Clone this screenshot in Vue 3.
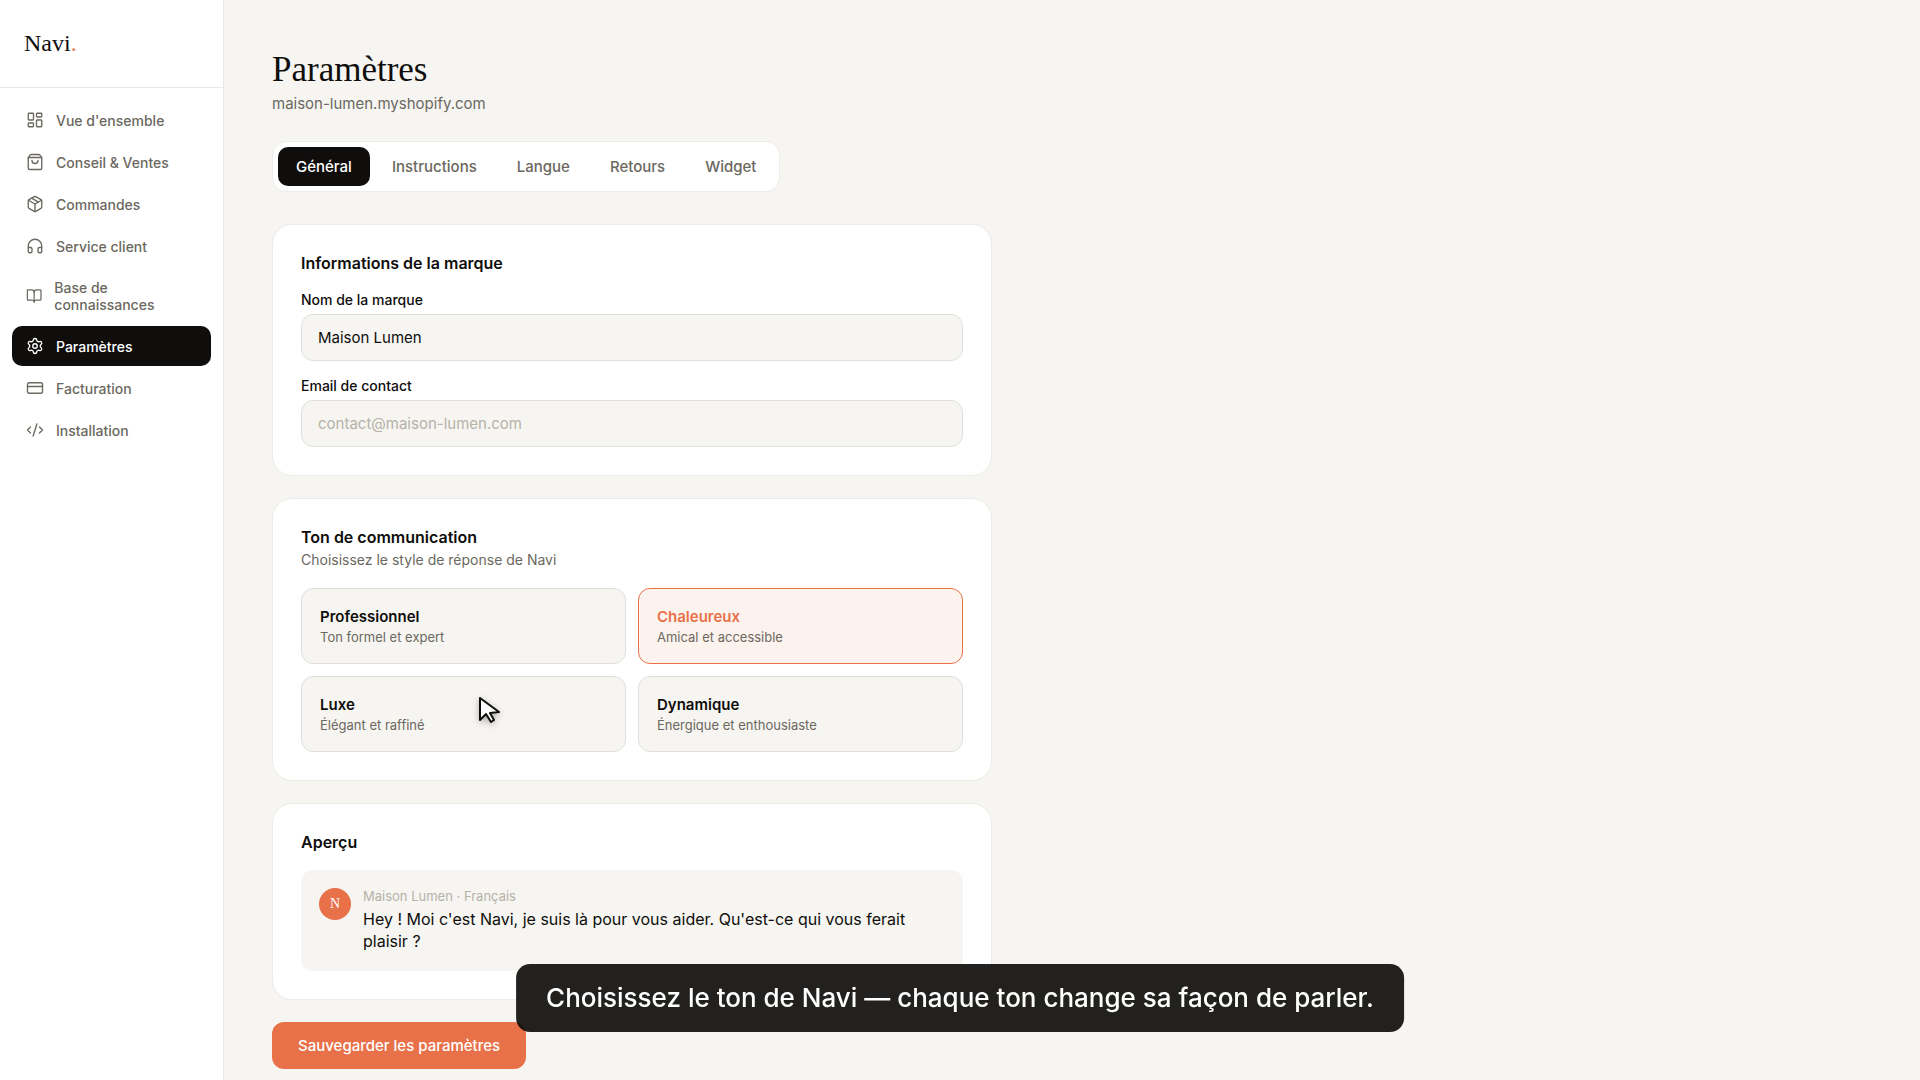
<template>
    <div class="layout">
        <aside class="sidebar">
            <div class="logo">Navi<span>.</span></div>
            <nav>
                <a v-for="item in navItems" :key="item.label" href="#" :class="{ active: item.active }">
                    <svg viewBox="0 0 24 24" width="18" height="18" aria-hidden="true">
                        <path v-for="d in item.icon" :key="d" :d="d" />
                    </svg>
                    <span>{{ item.label }}</span>
                </a>
            </nav>
        </aside>

        <main>
            <h1>Paramètres</h1>
            <p class="shop">maison-lumen.myshopify.com</p>

            <div class="tabs">
                <button v-for="tab in tabs" :key="tab" type="button" :class="{ active: tab === activeTab }" @click="activeTab = tab">{{ tab }}</button>
            </div>

            <form @submit.prevent>
                <section class="card">
                    <h2>Informations de la marque</h2>
                    <div class="fields">
                        <div class="field">
                            <label for="brand">Nom de la marque</label>
                            <input id="brand" v-model="brand" type="text">
                        </div>
                        <div class="field">
                            <label for="email">Email de contact</label>
                            <input id="email" v-model="email" type="email" placeholder="contact@maison-lumen.com">
                        </div>
                    </div>
                </section>

                <section class="card">
                    <h2 class="with-hint">Ton de communication</h2>
                    <p class="hint">Choisissez le style de réponse de Navi</p>
                    <div class="tones">
                        <button v-for="t in tones" :key="t.name" type="button" class="tone" :class="{ selected: t.name === tone }" @click="tone = t.name">
                            <strong>{{ t.name }}</strong>
                            <span>{{ t.description }}</span>
                        </button>
                    </div>
                </section>

                <section class="card">
                    <h2>Aperçu</h2>
                    <div class="preview">
                        <div class="avatar">N</div>
                        <div class="bubble">
                            <p class="meta">{{ brand }} · Français</p>
                            <p class="message">Hey ! Moi c'est Navi, je suis là pour vous aider. Qu'est-ce qui vous ferait plaisir ?</p>
                        </div>
                    </div>
                </section>

                <button type="submit" class="save">Sauvegarder les paramètres</button>
            </form>
        </main>

        <div class="caption">Choisissez le ton de Navi — chaque ton change sa façon de parler.</div>

        <svg class="cursor" viewBox="0 0 24 30" width="24" height="30" aria-hidden="true">
            <path d="M2 2v22l6-6 5 8 3-2-4-7 9-1z" />
        </svg>
    </div>
</template>

<script setup>
import { ref } from "vue";

const navItems = [
    {
        label: "Vue d'ensemble",
        icon: [
            "M4 3h5a1 1 0 0 1 1 1v7a1 1 0 0 1-1 1H4a1 1 0 0 1-1-1V4a1 1 0 0 1 1-1z",
            "M15 3h5a1 1 0 0 1 1 1v3a1 1 0 0 1-1 1h-5a1 1 0 0 1-1-1V4a1 1 0 0 1 1-1z",
            "M15 12h5a1 1 0 0 1 1 1v7a1 1 0 0 1-1 1h-5a1 1 0 0 1-1-1v-7a1 1 0 0 1 1-1z",
            "M4 16h5a1 1 0 0 1 1 1v3a1 1 0 0 1-1 1H4a1 1 0 0 1-1-1v-3a1 1 0 0 1 1-1z"
        ]
    },
    {
        label: "Conseil & Ventes",
        icon: [
            "M16 10a4 4 0 0 1-8 0",
            "M3.103 6.034h17.794",
            "M3.4 5.467a2 2 0 0 0-.4 1.2V20a2 2 0 0 0 2 2h14a2 2 0 0 0 2-2V6.667a2 2 0 0 0-.4-1.2l-2-2.667A2 2 0 0 0 17 2H7a2 2 0 0 0-1.6.8z"
        ]
    },
    {
        label: "Commandes",
        icon: [
            "M11 21.73a2 2 0 0 0 2 0l7-4A2 2 0 0 0 21 16V8a2 2 0 0 0-1-1.73l-7-4a2 2 0 0 0-2 0l-7 4A2 2 0 0 0 3 8v8a2 2 0 0 0 1 1.73z",
            "M12 22V12",
            "m3.3 7 8.7 5 8.7-5",
            "m7.5 4.27 9 5.15"
        ]
    },
    {
        label: "Service client",
        icon: ["M3 14h3a2 2 0 0 1 2 2v3a2 2 0 0 1-2 2H5a2 2 0 0 1-2-2v-7a9 9 0 0 1 18 0v7a2 2 0 0 1-2 2h-1a2 2 0 0 1-2-2v-3a2 2 0 0 1 2-2h3"]
    },
    {
        label: "Base de connaissances",
        icon: [
            "M12 7v14",
            "M3 18a1 1 0 0 1-1-1V4a1 1 0 0 1 1-1h5a4 4 0 0 1 4 4 4 4 0 0 1 4-4h5a1 1 0 0 1 1 1v13a1 1 0 0 1-1 1h-6a3 3 0 0 0-3 3 3 3 0 0 0-3-3z"
        ]
    },
    {
        label: "Paramètres",
        active: true,
        icon: [
            "M9.671 4.136a2.34 2.34 0 0 1 4.659 0 2.34 2.34 0 0 0 3.319 1.915 2.34 2.34 0 0 1 2.33 4.033 2.34 2.34 0 0 0 0 3.831 2.34 2.34 0 0 1-2.33 4.033 2.34 2.34 0 0 0-3.319 1.915 2.34 2.34 0 0 1-4.659 0 2.34 2.34 0 0 0-3.32-1.915 2.34 2.34 0 0 1-2.33-4.033 2.34 2.34 0 0 0 0-3.831A2.34 2.34 0 0 1 6.35 6.051a2.34 2.34 0 0 0 3.319-1.915",
            "M15 12a3 3 0 1 1-6 0 3 3 0 0 1 6 0z"
        ]
    },
    {
        label: "Facturation",
        icon: [
            "M4 5h16a2 2 0 0 1 2 2v10a2 2 0 0 1-2 2H4a2 2 0 0 1-2-2V7a2 2 0 0 1 2-2z",
            "M2 10h20"
        ]
    },
    {
        label: "Installation",
        icon: ["m18 16 4-4-4-4", "m6 8-4 4 4 4", "m14.5 4-5 16"]
    }
];

const tabs = ["Général", "Instructions", "Langue", "Retours", "Widget"];
const activeTab = ref("Général");

const brand = ref("Maison Lumen");
const email = ref("");

const tones = [
    { name: "Professionnel", description: "Ton formel et expert" },
    { name: "Chaleureux", description: "Amical et accessible" },
    { name: "Luxe", description: "Élégant et raffiné" },
    { name: "Dynamique", description: "Énergique et enthousiaste" }
];
const tone = ref("Chaleureux");
</script>

<style>
body {
    margin: 0;
    background: #f6f5f1;
}
</style>

<style scoped>
* {
    box-sizing: border-box;
}

.layout {
    display: flex;
    min-height: 100vh;
    background: #f6f5f1;
    color: #0f0e0c;
    font-family: Inter, "Liberation Sans", sans-serif;
}

h1, h2, p {
    margin: 0;
}

button, input {
    font-family: inherit;
    color: inherit;
}

button {
    border: none;
    cursor: pointer;
}

/* Sidebar */
.sidebar {
    flex: 0 0 224px;
    background: #fff;
    border-right: 1px solid #e8e8e8;
}

.logo {
    padding: 27px 24px 28px;
    border-bottom: 1px solid #e8e8e8;
    font-family: "Liberation Serif", serif;
    font-size: 24px;
    line-height: 32px;
}

.logo span {
    color: #e8714a;
}

nav {
    display: flex;
    flex-direction: column;
    gap: 2px;
    padding: 12px;
}

nav a {
    display: flex;
    align-items: center;
    gap: 12px;
    min-height: 40px;
    padding: 11px 14px;
    border-radius: 10px;
    color: #6b6860;
    font-size: 14px;
    font-weight: 500;
    line-height: 17px;
    text-decoration: none;
}

nav a.active {
    background: #0f0e0c;
    color: #fff;
}

nav svg {
    fill: none;
    stroke: currentColor;
    stroke-width: 1.8;
    stroke-linecap: round;
    stroke-linejoin: round;
}

/* Content */
main {
    flex: 1;
    min-width: 0;
    padding: 47px 48px 8px;
}

h1 {
    font-family: "Liberation Serif", serif;
    font-size: 35px;
    font-weight: 400;
    line-height: 46px;
}

.shop {
    margin: 2px 0 28px;
    color: #6b6860;
    font-size: 15px;
    line-height: 18px;
}

.tabs {
    display: flex;
    gap: 4px;
    width: fit-content;
    margin-bottom: 32px;
    padding: 5px;
    background: #fff;
    border: 1px solid #ebebe9;
    border-radius: 14px;
}

.tabs button {
    height: 39px;
    padding: 0 18px;
    background: none;
    border-radius: 10px;
    color: #6b6860;
    font-size: 15px;
    font-weight: 500;
}

.tabs button.active {
    background: #0f0e0c;
    color: #fff;
}

form {
    display: flex;
    flex-direction: column;
    align-items: flex-start;
    gap: 22px;
    max-width: 720px;
}

.card {
    width: 100%;
    padding: 28px;
    background: #fff;
    border: 1px solid #ebebe9;
    border-radius: 20px;
}

h2 {
    margin-bottom: 18px;
    font-size: 16px;
    font-weight: 600;
    line-height: 20px;
}

h2.with-hint {
    margin-bottom: 3px;
}

.hint {
    margin-bottom: 18px;
    color: #6b6860;
    font-size: 14px;
    line-height: 20px;
}

.fields {
    display: flex;
    flex-direction: column;
    gap: 16px;
}

.field {
    display: flex;
    flex-direction: column;
    gap: 5px;
}

.field label {
    font-size: 14px;
    font-weight: 500;
    line-height: 18px;
}

.field input {
    width: 100%;
    height: 47px;
    padding: 0 16px;
    background: #f6f5f1;
    border: 1px solid #dfdfdb;
    border-radius: 12px;
    font-size: 15px;
    outline: none;
}

.field input::placeholder {
    color: #b5b2a8;
    opacity: 1;
}

.tones {
    display: grid;
    grid-template-columns: 1fr 1fr;
    gap: 12px;
}

.tone {
    display: flex;
    flex-direction: column;
    padding: 18px;
    background: #f6f5f1;
    border: 1px solid #dfdfdb;
    border-radius: 12px;
    text-align: left;
}

.tone strong {
    margin-bottom: 2px;
    font-size: 15px;
    font-weight: 600;
    line-height: 20px;
}

.tone span {
    color: #6b6860;
    font-size: 13px;
    line-height: 16px;
}

.tone.selected {
    background: #fdf3ee;
    border-color: #e8714a;
}

.tone.selected strong {
    color: #e8714a;
}

.preview {
    display: flex;
    gap: 12px;
    padding: 18px 18px 19px;
    background: #f6f5f1;
    border-radius: 12px;
}

.avatar {
    flex: 0 0 32px;
    height: 32px;
    background: #e8714a;
    border-radius: 50%;
    color: #fff;
    font-family: "Liberation Serif", serif;
    font-size: 14px;
    line-height: 32px;
    text-align: center;
}

.meta {
    margin-bottom: 4px;
    color: #b5b2a8;
    font-size: 13px;
    line-height: 16px;
}

.message {
    font-size: 16px;
    line-height: 22px;
}

.save {
    height: 47px;
    padding: 0 26px;
    background: #e8714a;
    border-radius: 12px;
    color: #fff;
    font-size: 15px;
    font-weight: 500;
}

/* Overlays */
.caption {
    position: fixed;
    bottom: 48px;
    left: 50%;
    transform: translateX(-50%);
    padding: 18px 30px;
    background: rgba(15, 14, 12, 0.92);
    border-radius: 14px;
    color: #fff;
    font-size: 26px;
    font-weight: 500;
    line-height: 32px;
    white-space: nowrap;
}

.cursor {
    position: absolute;
    top: 696px;
    left: 478px;
    fill: #fff;
    stroke: #0f0e0c;
    stroke-width: 2;
    stroke-linejoin: round;
    filter: drop-shadow(0 2px 3px rgba(0, 0, 0, 0.3));
    pointer-events: none;
}
</style>
